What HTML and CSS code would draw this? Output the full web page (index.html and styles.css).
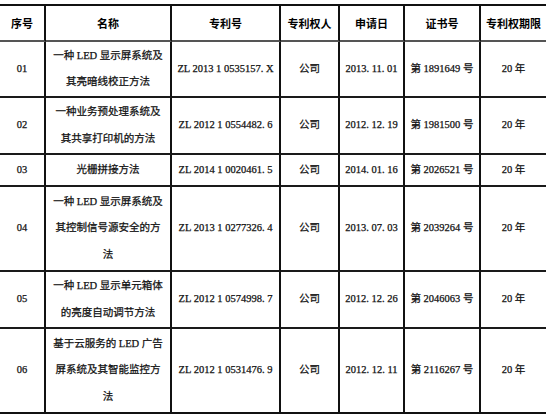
FILE: index.html
```html
<!DOCTYPE html>
<html lang="zh-CN">
<head>
<meta charset="utf-8">
<title>专利列表</title>
<link rel="stylesheet" href="styles.css">
</head>
<body>
<div class="page">
<table class="patents">
  <thead>
    <tr class="head">
      <th class="c1">序号</th>
      <th class="c2">名称</th>
      <th class="c3">专利号</th>
      <th class="c4">专利权人</th>
      <th class="c5">申请日</th>
      <th class="c6">证书号</th>
      <th class="c7">专利权期限</th>
    </tr>
  </thead>
  <tbody>
    <tr class="r2a">
      <td>01</td>
      <td>一种 LED 显示屏系统及<br>其亮暗线校正方法</td>
      <td>ZL 2013 1 0535157. X</td>
      <td>公司</td>
      <td>2013. 11. 01</td>
      <td>第 1891649 号</td>
      <td>20 年</td>
    </tr>
    <tr class="r2">
      <td>02</td>
      <td>一种业务预处理系统及<br>其共享打印机的方法</td>
      <td>ZL 2012 1 0554482. 6</td>
      <td>公司</td>
      <td>2012. 12. 19</td>
      <td>第 1981500 号</td>
      <td>20 年</td>
    </tr>
    <tr class="r1">
      <td>03</td>
      <td>光栅拼接方法</td>
      <td>ZL 2014 1 0020461. 5</td>
      <td>公司</td>
      <td>2014. 01. 16</td>
      <td>第 2026521 号</td>
      <td>20 年</td>
    </tr>
    <tr class="r3">
      <td>04</td>
      <td>一种 LED 显示屏系统及<br>其控制信号源安全的方<br>法</td>
      <td>ZL 2013 1 0277326. 4</td>
      <td>公司</td>
      <td>2013. 07. 03</td>
      <td>第 2039264 号</td>
      <td>20 年</td>
    </tr>
    <tr class="r2">
      <td>05</td>
      <td>一种 LED 显示单元箱体<br>的亮度自动调节方法</td>
      <td>ZL 2012 1 0574998. 7</td>
      <td>公司</td>
      <td>2012. 12. 26</td>
      <td>第 2046063 号</td>
      <td>20 年</td>
    </tr>
    <tr class="r3">
      <td>06</td>
      <td>基于云服务的 LED 广告<br>屏系统及其智能监控方<br>法</td>
      <td>ZL 2012 1 0531476. 9</td>
      <td>公司</td>
      <td>2012. 12. 11</td>
      <td>第 2116267 号</td>
      <td>20 年</td>
    </tr>
  </tbody>
</table>
</div>
</body>
</html>
```

FILE: styles.css
```css
html, body {
  margin: 0;
  padding: 0;
  background: #ffffff;
}

.page {
  padding-top: 4px;
}

.patents {
  border-collapse: separate;
  border-spacing: 0;
  table-layout: fixed;
  width: 546px;
  font-family: "Liberation Serif", "Noto Sans CJK SC", serif;
  font-size: 10.5px;
  color: #111;
}

.patents th,
.patents td {
  box-sizing: border-box;
  padding: 0;
  text-align: center;
  vertical-align: middle;
  border-right: 2px solid #111;
  border-bottom: 2px solid #1a1a1a;
  line-height: 26.5px;
  white-space: nowrap;
}

.patents td {
  -webkit-text-stroke: 0.25px #111;
}

.patents th:last-child,
.patents td:last-child {
  border-right: none;
}

.patents th {
  font-weight: bold;
  font-family: "Noto Sans CJK SC", sans-serif;
  font-size: 11px;
  color: #000;
  border-top: 2px solid #111;
  border-bottom-color: #555;
  height: 38px;
}

.c1 { width: 46px; }
.c2 { width: 126px; }
.c3 { width: 109px; }
.c4 { width: 59px; }
.c5 { width: 65px; }
.c6 { width: 76px; }
.c7 { width: 65px; }

.r1 td { height: 32px; }
.r2a td { height: 56px; }
.r2 td { height: 57px; }
.r3 td { height: 85px; }

.patents tbody tr:last-child td {
  border-bottom-color: #111;
}
```
